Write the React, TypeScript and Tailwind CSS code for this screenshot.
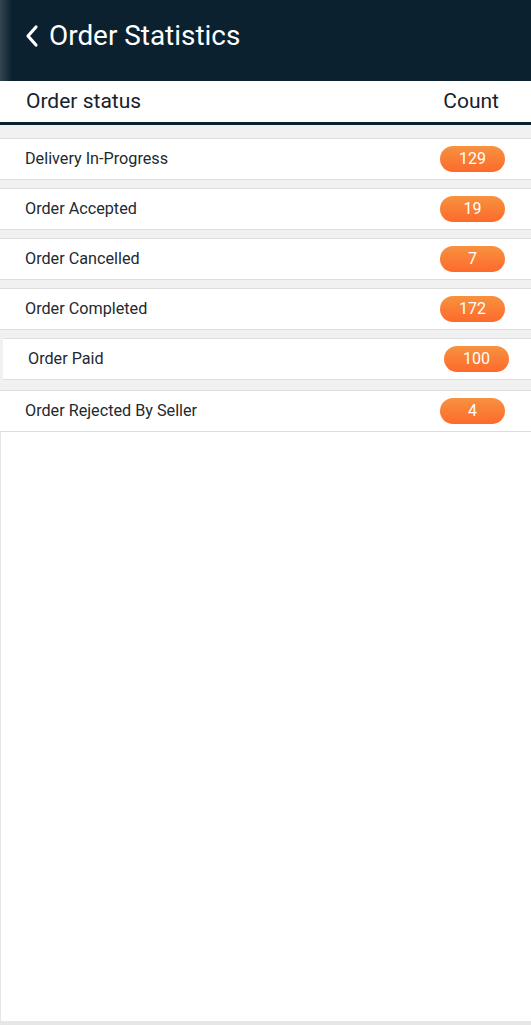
const rows = [
  { label: "Delivery In-Progress", count: 129 },
  { label: "Order Accepted", count: 19 },
  { label: "Order Cancelled", count: 7 },
  { label: "Order Completed", count: 172 },
  { label: "Order Paid", count: 100, inset: true },
  { label: "Order Rejected By Seller", count: 4, last: true },
];

export default function App() {
  return (
    <div className="flex min-h-[1025px] w-[531px] flex-col bg-white font-['Roboto',sans-serif]">
      <header className="flex h-[81px] items-center bg-[linear-gradient(90deg,#34464f_0px,#0b2130_12px,#0b2130_100%)] pb-[10px] pl-[24px]">
        <svg width="16" height="24" viewBox="0 0 16 24" className="mr-[9px]">
          <path
            d="M12 3 L4 12 L12 21"
            fill="none"
            stroke="white"
            strokeWidth="3.2"
            strokeLinecap="round"
            strokeLinejoin="round"
          />
        </svg>
        <h1 className="text-[27.9px] leading-none text-white">Order Statistics</h1>
      </header>

      <div className="flex h-[41px] items-center justify-between bg-white pb-[1px] pl-[26px] pr-[32px] pt-[2px] text-[21px] text-[#16222c]">
        <span>Order status</span>
        <span>Count</span>
      </div>
      <div className="h-[3px] bg-[#0b2130]" />

      <div className="flex flex-col gap-[8px] bg-[#f1f1f1] pt-[13px]">
        {rows.map((row, i) => (
          <div
            key={i}
            className={
              "flex h-[42px] items-center justify-between border-y border-[#dedede] bg-white " +
              (row.inset ? "ml-[3px] pl-[25px] pr-[22px]" : "pl-[25px] pr-[26px]") +
              (row.last ? " mt-[2px]" : "")
            }
          >
            <span className="text-[16.2px] text-[#222a30]">{row.label}</span>
            <span className="flex h-[26px] w-[65px] items-center justify-center rounded-full bg-[linear-gradient(180deg,#f7923f,#fd6a2c)] text-[16px] text-white">
              {row.count}
            </span>
          </div>
        ))}
      </div>

      <div className="flex-1 border-b-[4px] border-l border-[#e6e6e6] bg-white" />
    </div>
  );
}
